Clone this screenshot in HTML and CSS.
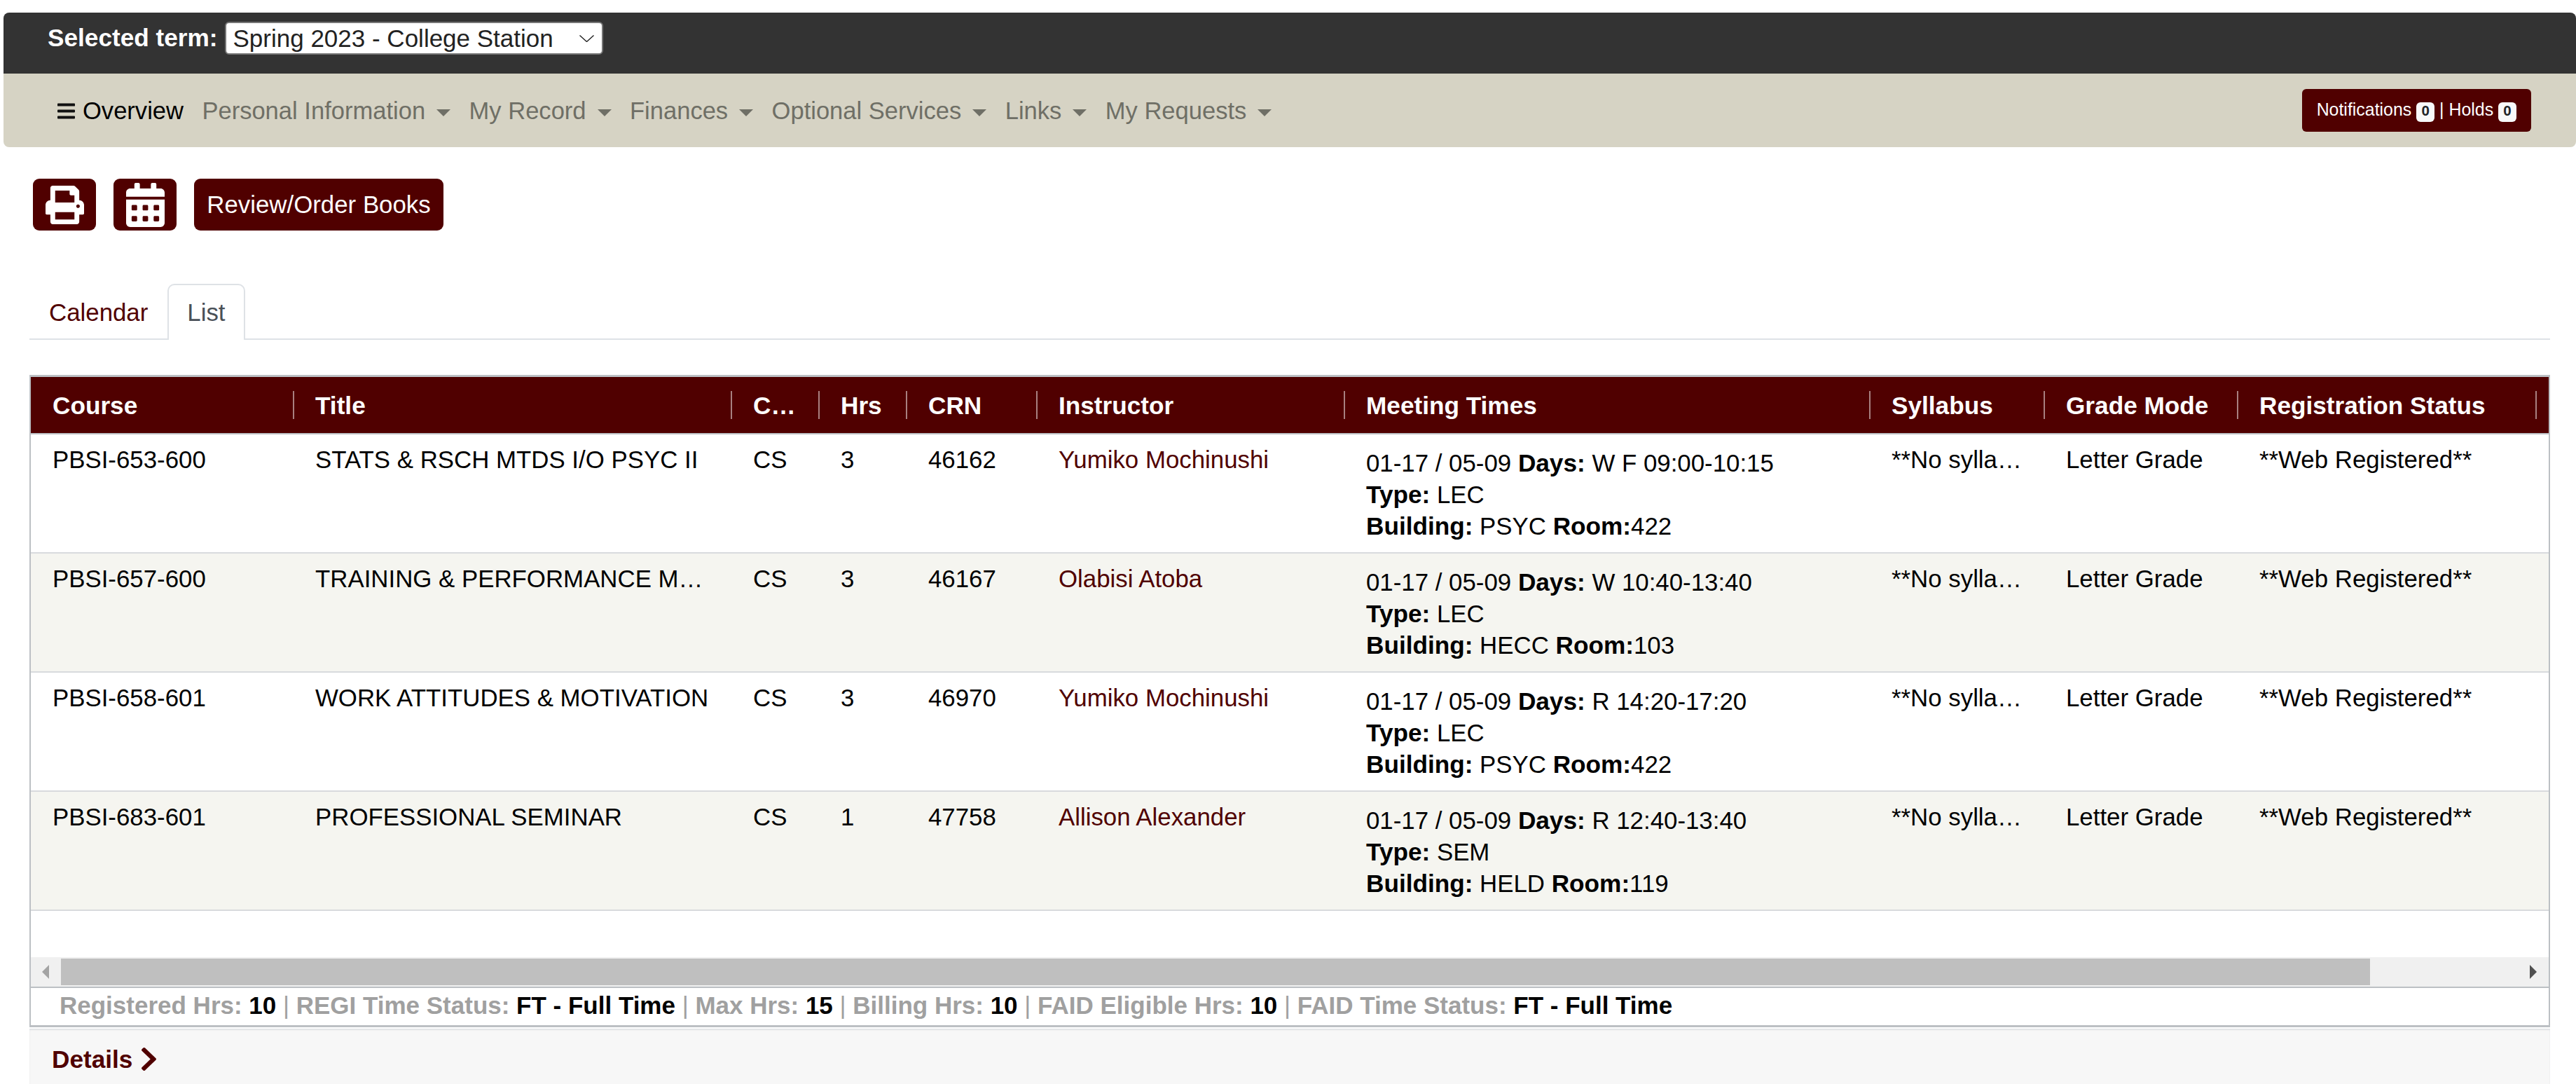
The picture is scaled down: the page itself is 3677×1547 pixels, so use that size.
FILE: index.html
```html
<!DOCTYPE html>
<html lang="en">
<head>
  <meta charset="UTF-8" />
  <meta name="viewport" content="width=device-width, initial-scale=1.0" />
  <title>Schedule</title>
  <link rel="stylesheet" href="styles.css">
</head>
<body>
  <header class="site-header">
    <div class="term-bar">
      <label class="term-label" for="termSelect">Selected term:</label>
      <div class="term-select-wrap">
        <select class="term-select" id="termSelect">
          <option>Spring 2023 - College Station</option>
        </select>
        <svg class="term-chevron" viewBox="0 0 21 10"><path d="M0.5 0.5 L10.5 9.5 L20.5 0.5" fill="none" stroke="#222" stroke-width="1.4"/></svg>
      </div>
    </div>
    <nav class="main-nav">
      <ul class="nav-list">
        <li class="nav-item nav-active">
          <svg class="bars-icon" viewBox="0 0 448 512"><path fill="#111" d="M16 132h416c8.837 0 16-7.163 16-16V76c0-8.837-7.163-16-16-16H16C7.163 60 0 67.163 0 76v40c0 8.837 7.163 16 16 16zm0 160h416c8.837 0 16-7.163 16-16v-40c0-8.837-7.163-16-16-16H16c-8.837 0-16 7.163-16 16v40c0 8.837 7.163 16 16 16zm0 160h416c8.837 0 16-7.163 16-16v-40c0-8.837-7.163-16-16-16H16c-8.837 0-16 7.163-16 16v40c0 8.837 7.163 16 16 16z"/></svg>
          Overview
        </li>
        <li class="nav-item">Personal Information<span class="caret"></span></li>
        <li class="nav-item">My Record<span class="caret"></span></li>
        <li class="nav-item">Finances<span class="caret"></span></li>
        <li class="nav-item">Optional Services<span class="caret"></span></li>
        <li class="nav-item">Links<span class="caret"></span></li>
        <li class="nav-item">My Requests<span class="caret"></span></li>
      </ul>
      <button class="notify-btn">Notifications <span class="badge">0</span> | Holds <span class="badge">0</span></button>
    </nav>
  </header>

  <main class="content">
    <div class="actions">
      <button class="btn btn-icon">
        <svg class="print-icon" viewBox="0 0 512 512"><path fill="#fff" d="M448 192V77.25c0-8.49-3.37-16.62-9.37-22.63L393.37 9.37c-6-6-14.14-9.37-22.63-9.37H96C78.33 0 64 14.33 64 32v160c-35.35 0-64 28.65-64 64v112c0 8.84 7.16 16 16 16h48v96c0 17.67 14.33 32 32 32h320c17.67 0 32-14.33 32-32v-96h48c8.84 0 16-7.16 16-16V256c0-35.35-28.65-64-64-64zm-64 256H128v-96h256v96zm0-224H128V64h192v48c0 8.84 7.16 16 16 16h48v96zm48 72c-13.25 0-24-10.75-24-24 0-13.26 10.75-24 24-24s24 10.74 24 24c0 13.25-10.75 24-24 24z"/></svg>
      </button>
      <button class="btn btn-icon">
        <svg class="cal-icon" viewBox="0 0 448 512"><path fill="#fff" d="M0 464c0 26.5 21.5 48 48 48h352c26.5 0 48-21.5 48-48V192H0v272zm320-196c0-6.6 5.4-12 12-12h40c6.6 0 12 5.4 12 12v40c0 6.6-5.4 12-12 12h-40c-6.6 0-12-5.4-12-12v-40zm0 128c0-6.6 5.4-12 12-12h40c6.6 0 12 5.4 12 12v40c0 6.6-5.4 12-12 12h-40c-6.6 0-12-5.4-12-12v-40zM192 268c0-6.6 5.4-12 12-12h40c6.6 0 12 5.4 12 12v40c0 6.6-5.4 12-12 12h-40c-6.6 0-12-5.4-12-12v-40zm0 128c0-6.6 5.4-12 12-12h40c6.6 0 12 5.4 12 12v40c0 6.6-5.4 12-12 12h-40c-6.6 0-12-5.4-12-12v-40zM64 268c0-6.6 5.4-12 12-12h40c6.6 0 12 5.4 12 12v40c0 6.6-5.4 12-12 12H76c-6.6 0-12-5.4-12-12v-40zm0 128c0-6.6 5.4-12 12-12h40c6.6 0 12 5.4 12 12v40c0 6.6-5.4 12-12 12H76c-6.6 0-12-5.4-12-12v-40zM400 64h-48V16c0-8.8-7.2-16-16-16h-32c-8.8 0-16 7.2-16 16v48H160V16c0-8.8-7.2-16-16-16h-32c-8.8 0-16 7.2-16 16v48H48C21.5 64 0 85.5 0 112v48h448v-48c0-26.5-21.5-48-48-48z"/></svg>
      </button>
      <button class="btn btn-text">Review/Order Books</button>
    </div>

    <div class="tabs">
      <a class="tab">Calendar</a>
      <a class="tab tab-active">List</a>
    </div>

    <section class="schedule">
      <div class="table-view">
        <table class="course-table">
          <colgroup>
            <col class="c-course"><col class="c-title"><col class="c-campus"><col class="c-hrs"><col class="c-crn"><col class="c-instructor"><col class="c-meeting"><col class="c-syllabus"><col class="c-grade"><col class="c-status"><col class="c-rest">
          </colgroup>
          <thead>
            <tr>
              <th>Course</th><th>Title</th><th>Campus</th><th>Hrs</th><th>CRN</th><th>Instructor</th><th>Meeting Times</th><th>Syllabus</th><th>Grade Mode</th><th>Registration Status</th><th></th>
            </tr>
          </thead>
          <tbody>
            <tr>
              <td>PBSI-653-600</td>
              <td>STATS &amp; RSCH MTDS I/O PSYC II</td>
              <td>CS</td>
              <td>3</td>
              <td>46162</td>
              <td><a class="person">Yumiko Mochinushi</a></td>
              <td>
                <div class="meeting">
                  <div>01-17 / 05-09 <b>Days:</b> W F 09:00-10:15</div>
                  <div><b>Type:</b> LEC</div>
                  <div><b>Building:</b> PSYC <b>Room:</b>422</div>
                </div>
              </td>
              <td>**No syllabus**</td>
              <td>Letter Grade</td>
              <td>**Web Registered**</td>
              <td></td>
            </tr>
            <tr>
              <td>PBSI-657-600</td>
              <td>TRAINING &amp; PERFORMANCE MGMT</td>
              <td>CS</td>
              <td>3</td>
              <td>46167</td>
              <td><a class="person">Olabisi Atoba</a></td>
              <td>
                <div class="meeting">
                  <div>01-17 / 05-09 <b>Days:</b> W 10:40-13:40</div>
                  <div><b>Type:</b> LEC</div>
                  <div><b>Building:</b> HECC <b>Room:</b>103</div>
                </div>
              </td>
              <td>**No syllabus**</td>
              <td>Letter Grade</td>
              <td>**Web Registered**</td>
              <td></td>
            </tr>
            <tr>
              <td>PBSI-658-601</td>
              <td>WORK ATTITUDES &amp; MOTIVATION</td>
              <td>CS</td>
              <td>3</td>
              <td>46970</td>
              <td><a class="person">Yumiko Mochinushi</a></td>
              <td>
                <div class="meeting">
                  <div>01-17 / 05-09 <b>Days:</b> R 14:20-17:20</div>
                  <div><b>Type:</b> LEC</div>
                  <div><b>Building:</b> PSYC <b>Room:</b>422</div>
                </div>
              </td>
              <td>**No syllabus**</td>
              <td>Letter Grade</td>
              <td>**Web Registered**</td>
              <td></td>
            </tr>
            <tr>
              <td>PBSI-683-601</td>
              <td>PROFESSIONAL SEMINAR</td>
              <td>CS</td>
              <td>1</td>
              <td>47758</td>
              <td><a class="person">Allison Alexander</a></td>
              <td>
                <div class="meeting">
                  <div>01-17 / 05-09 <b>Days:</b> R 12:40-13:40</div>
                  <div><b>Type:</b> SEM</div>
                  <div><b>Building:</b> HELD <b>Room:</b>119</div>
                </div>
              </td>
              <td>**No syllabus**</td>
              <td>Letter Grade</td>
              <td>**Web Registered**</td>
              <td></td>
            </tr>
          </tbody>
        </table>
      </div>
      <div class="scrollbar">
        <span class="arrow arrow-left"></span>
        <div class="scroll-track"><div class="scroll-thumb"></div></div>
        <span class="arrow arrow-right"></span>
      </div>
      <div class="totals">
        <b class="lbl">Registered Hrs:</b> <b>10</b> <span class="sep">|</span>
        <b class="lbl">REGI Time Status:</b> <b>FT - Full Time</b> <span class="sep">|</span>
        <b class="lbl">Max Hrs:</b> <b>15</b> <span class="sep">|</span>
        <b class="lbl">Billing Hrs:</b> <b>10</b> <span class="sep">|</span>
        <b class="lbl">FAID Eligible Hrs:</b> <b>10</b> <span class="sep">|</span>
        <b class="lbl">FAID Time Status:</b> <b>FT - Full Time</b>
      </div>
    </section>

    <div class="details">
      <b>Details</b>
      <svg class="chevron" viewBox="27 37 266 438" preserveAspectRatio="none"><path fill="#500000" d="M285.476 272.971L91.132 467.314c-9.373 9.373-24.569 9.373-33.941 0l-22.667-22.667c-9.357-9.357-9.375-24.522-.04-33.901L188.505 256 34.484 101.255c-9.335-9.379-9.317-24.544.04-33.901l22.667-22.667c9.373-9.373 24.569-9.373 33.941 0L285.475 239.03c9.373 9.372 9.373 24.568.001 33.941z"/></svg>
    </div>
  </main>
</body>
</html>
```

FILE: styles.css
```css
html {
  overflow: hidden;
}
body {
  margin: 18px 0 0 5px;
  font-family: "Liberation Sans", Arial, sans-serif;
  font-size: 34.85px;
  line-height: 45px;
  color: #000;
  background-color: #fff;
}
b,
.term-label,
.course-table th {
  font-size: 35.2px;
  font-weight: bold;
}
.term-bar {
  height: 87px;
  box-sizing: border-box;
  display: flex;
  align-items: flex-start;
  gap: 10px;
  padding: 13px 0 0 63px;
  background-color: #333;
  border-radius: 8px 8px 0 0;
}
.term-label {
  color: #fff;
}
.term-select-wrap {
  position: relative;
  height: 47px;
}
.term-select {
  appearance: none;
  width: 540px;
  height: 47px;
  padding: 0 0 0 10px;
  font-family: inherit;
  font-size: 35px;
  color: #222;
  background-color: #fff;
  border: 2px solid #767676;
  border-radius: 6px;
}
.term-chevron {
  position: absolute;
  top: 19px;
  right: 13px;
  width: 21px;
  height: 10px;
}
.main-nav {
  height: 105px;
  box-sizing: border-box;
  display: flex;
  align-items: center;
  justify-content: space-between;
  padding: 0 64px 0 77px;
  background-color: #d6d3c4;
  border-radius: 0 0 8px 8px;
}
.nav-list {
  display: flex;
  align-items: center;
  gap: 26.4px;
  margin: 0;
  padding: 2px 0 0;
  font-size: 34.56px;
  list-style: none;
}
.nav-item {
  display: flex;
  align-items: center;
  color: #6f6f66;
  white-space: nowrap;
}
.nav-active {
  gap: 11px;
  color: #000;
}
.bars-icon {
  width: 25px;
  height: 29px;
}
.caret {
  width: 0;
  height: 0;
  margin: 5px 0 0 16px;
  border-top: 10px solid #6f6f66;
  border-left: 10px solid transparent;
  border-right: 10px solid transparent;
}
.notify-btn {
  height: 61px;
  padding: 0 21px;
  font-family: inherit;
  font-size: 24.9px;
  color: #fff;
  background-color: #500000;
  border: none;
  border-radius: 6px;
}
.badge {
  display: inline-block;
  min-width: 26px;
  height: 28px;
  box-sizing: border-box;
  padding: 0 4px;
  font-size: 20.5px;
  font-weight: bold;
  line-height: 24px;
  text-align: center;
  color: #212529;
  background-color: #f8f9fa;
  border-radius: 6px;
}
.content {
  width: 3598px;
  margin-left: 37px;
}
.actions {
  display: flex;
  gap: 25px;
  padding: 45px 0 0 5px;
}
.btn {
  height: 74px;
  display: flex;
  align-items: center;
  justify-content: center;
  font-family: inherit;
  font-size: 34.85px;
  color: #fff;
  background-color: #500000;
  border: none;
  border-radius: 9px;
}
.btn-icon {
  width: 90px;
  padding: 0;
}
.btn-text {
  width: 356px;
  padding: 0;
}
.print-icon {
  width: 55px;
  height: 55px;
}
.cal-icon {
  width: 55px;
  height: 63px;
}
.tabs {
  display: flex;
  margin-top: 76px;
  border-bottom: 2px solid #dee2e6;
}
.tab {
  height: 78px;
  margin-bottom: -2px;
  padding: 0 26px;
  line-height: 78px;
  color: #500000;
  border: 2px solid transparent;
  border-bottom: none;
}
.tab-active {
  color: #495057;
  background-color: #fff;
  border-color: #dee2e6;
  border-radius: 10px 10px 0 0;
}
.schedule {
  margin-top: 50px;
  border: 2px solid #bcc0c4;
  border-top-width: 3px;
  border-bottom-width: 3px;
}
.table-view {
  height: 828px;
  overflow: hidden;
}
.course-table {
  width: 3777px;
  table-layout: fixed;
  border-collapse: collapse;
}
.c-course { width: 376px; }
.c-title { width: 625px; }
.c-campus { width: 125px; }
.c-hrs { width: 125px; }
.c-crn { width: 186px; }
.c-instructor { width: 439px; }
.c-meeting { width: 750px; }
.c-syllabus { width: 249px; }
.c-grade { width: 276px; }
.c-status { width: 426px; }
.c-rest { width: 200px; }
.course-table th {
  position: relative;
  height: 80px;
  padding: 0 30px;
  text-align: left;
  color: #fff;
  background-color: #500000;
  border-bottom: 2px solid #bcc0c4;
  white-space: nowrap;
  overflow: hidden;
  text-overflow: ellipsis;
}
.course-table th:first-child,
.course-table td:first-child {
  padding-left: 31px;
}
.course-table th:after {
  content: "";
  position: absolute;
  top: 20px;
  right: 0;
  width: 2px;
  height: 40px;
  background-color: rgba(255, 255, 255, 0.5);
}
.course-table th:last-child:after {
  display: none;
}
.course-table td {
  height: 170px;
  box-sizing: border-box;
  padding: 13px 30px;
  vertical-align: top;
  border-bottom: 2px solid #d8dadd;
  white-space: nowrap;
  overflow: hidden;
  text-overflow: ellipsis;
}
.course-table tbody tr:nth-child(even) td {
  background-color: #f5f5f0;
}
.meeting {
  margin-top: 5px;
}
.person {
  color: #500000;
}
.scrollbar {
  height: 42px;
  display: flex;
  align-items: center;
  background-color: #f0f0f0;
  border-bottom: 2px solid #bcc0c4;
}
.arrow {
  width: 0;
  height: 0;
  border-top: 10px solid transparent;
  border-bottom: 10px solid transparent;
}
.arrow-left {
  margin: 0 17px 0 16px;
  border-right: 10px solid #a3a3a3;
}
.arrow-right {
  margin: 0 17px 0 20px;
  border-left: 10px solid #505050;
}
.scroll-track {
  flex: 1;
  height: 38px;
}
.scroll-thumb {
  width: 3296px;
  height: 100%;
  background-color: #bfbfbf;
}
.totals {
  height: 53px;
  box-sizing: border-box;
  padding-left: 41px;
  line-height: 50px;
  white-space: nowrap;
}
.totals b {
  font-size: 35px;
}
.lbl,
.sep {
  color: #a0a0a0;
}
.details {
  height: 79px;
  box-sizing: border-box;
  margin-top: 2px;
  display: flex;
  align-items: center;
  gap: 13px;
  padding: 8px 0 0 32px;
  color: #500000;
  background-color: #f7f7f7;
  box-shadow: inset 0 2px 2px #dfe1e4;
}
.chevron {
  width: 21px;
  height: 33px;
}
```
